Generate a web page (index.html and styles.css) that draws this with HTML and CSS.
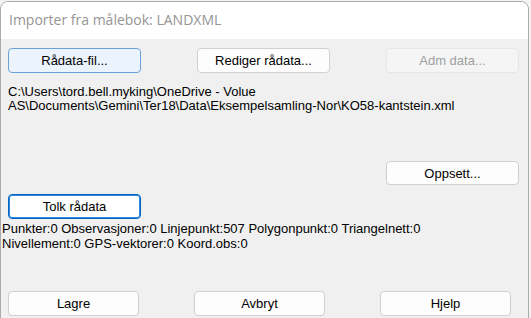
FILE: index.html
```html
<!DOCTYPE html>
<html lang="no">
<head>
  <meta charset="UTF-8" />
  <meta name="viewport" content="width=device-width, initial-scale=1.0" />
  <title>Importer fra målebok: LANDXML</title>
  <link rel="stylesheet" href="styles.css">
</head>
<body>
  <div class="window">
    <div class="titlebar">Importer fra målebok: LANDXML</div>
    <div class="content">
      <div class="row spread">
        <button class="btn default">Rådata-fil...</button>
        <button class="btn">Rediger rådata...</button>
        <button class="btn" disabled>Adm data...</button>
      </div>
      <p class="path">C:\Users\tord.bell.myking\OneDrive - Volue<br>AS\Documents\Gemini\Ter18\Data\Eksempelsamling-Nor\KO58-kantstein.xml</p>
      <div class="row end">
        <button class="btn setup">Oppsett...</button>
      </div>
      <div class="row">
        <button class="btn focused">Tolk rådata</button>
      </div>
      <p class="stats">Punkter:0 Observasjoner:0 Linjepunkt:507 Polygonpunkt:0 Triangelnett:0<br>Nivellement:0 GPS-vektorer:0 Koord.obs:0</p>
      <div class="row actions">
        <button class="btn small">Lagre</button>
        <button class="btn small">Avbryt</button>
        <button class="btn small">Hjelp</button>
      </div>
    </div>
  </div>
</body>
</html>
```

FILE: styles.css
```css
body {
  margin: 0;
  background: #f3f3f3;
  font-family: "Liberation Sans", Arial, sans-serif;
  overflow: hidden;
}
.window {
  box-sizing: border-box;
  width: 529px;
  height: 330px;
  margin-top: 1px;
  border: 1px solid #ababab;
  border-radius: 8px;
  overflow: hidden;
  background: #f0f0f0;
}
.titlebar {
  height: 37px;
  background: #fff;
  padding-left: 8px;
  font-family: "Open Sans", sans-serif;
  font-size: 14px;
  line-height: 36px;
  color: #959595;
}
.content {
  padding: 9px 9px 0 7px;
  font-size: 13px;
  color: #000;
}
.row {
  display: flex;
}
.spread {
  justify-content: space-between;
}
.end {
  justify-content: flex-end;
  margin-top: 48px;
}
.btn {
  box-sizing: border-box;
  width: 133px;
  height: 25px;
  padding: 0;
  font-family: "Liberation Sans", Arial, sans-serif;
  font-size: 13px;
  color: #000;
  background: #fdfdfd;
  border: 1px solid #d0d0d0;
  border-radius: 4px;
}
.btn.default {
  background: #ebf3fc;
  border-color: #6aa3dc;
}
.btn:disabled {
  background: #f5f5f5;
  border-color: #e6e6e6;
  color: #a0a0a0;
}
.btn.setup {
  height: 24px;
}
.btn.focused {
  margin-top: 9px;
  background: #fff;
  border-color: #0063c4;
  box-shadow: inset 0 0 0 1px #2f8ae0;
}
.path {
  margin: 12px 0 0;
  line-height: 14px;
}
.stats {
  margin: 2px 0 0 -6px;
  line-height: 15px;
}
.actions {
  margin-top: 40px;
  width: 503px;
  justify-content: space-between;
}
.btn.small {
  width: 131px;
}
```
